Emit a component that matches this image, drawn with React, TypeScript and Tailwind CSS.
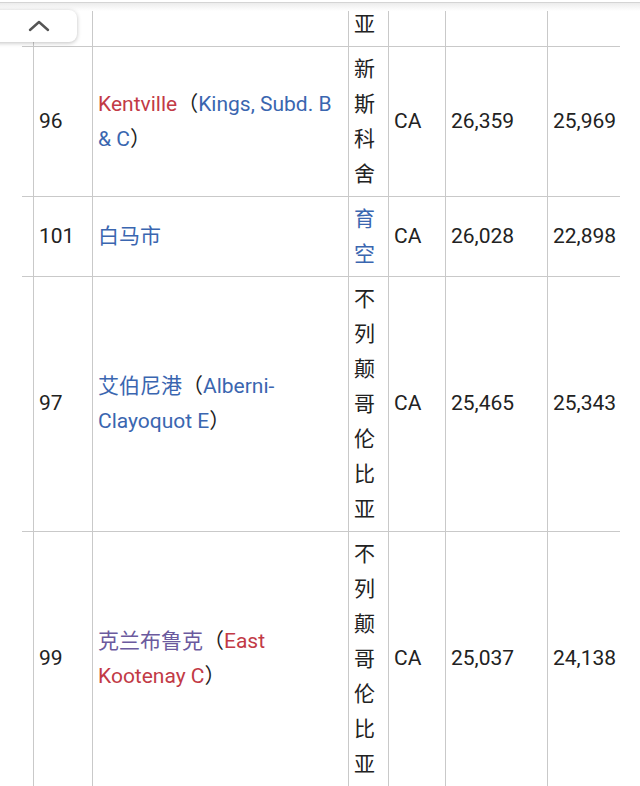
import React from "react";

const RED = "text-[#c23a46]";
const BLUE = "text-[#3a66b0]";
const PURPLE = "text-[#6b5a9e]";

function Prov({ chars, cls = "text-[#222]" }: { chars: string; cls?: string }) {
  return (
    <div className={`flex flex-col ${cls}`}>
      {chars.split("").map((c, i) => (
        <span key={i} className="block leading-[35px]">
          {c}
        </span>
      ))}
    </div>
  );
}

function Row({
  rank,
  name,
  prov,
  code,
  a,
  b,
  className = "",
}: {
  rank?: string;
  name?: React.ReactNode;
  prov: React.ReactNode;
  code?: string;
  a?: string;
  b?: string;
  className?: string;
}) {
  const cell = "flex items-center border-l border-[#c9c9c9] pl-[5px]";
  return (
    <div className={`flex w-[598px] ml-[22px] border-b border-[#c9c9c9] ${className}`}>
      <div className="w-[11px] shrink-0" />
      <div className={`${cell} w-[59px] shrink-0`}>{rank}</div>
      <div className={`${cell} w-[256px] shrink-0 pl-[5px] leading-[35px]`}>
        <div>{name}</div>
      </div>
      <div className={`${cell} w-[40px] shrink-0 pl-[5px] pt-[5px] pb-[4px]`}>{prov}</div>
      <div className={`${cell} w-[57px] shrink-0 pl-[4px]`}>{code}</div>
      <div className={`${cell} w-[102px] shrink-0`}>{a}</div>
      <div className={`${cell} flex-1`}>{b}</div>
    </div>
  );
}

export default function App() {
  return (
    <div
      className="relative w-[640px] h-[786px] overflow-hidden bg-white text-[21px] text-[#222]"
      style={{ fontFamily: 'Roboto, "Noto Sans CJK SC", sans-serif' }}
    >
      <div className="h-[3px] bg-white border-b border-[#d4d4d4]" />
      <div className="h-[8px] bg-gradient-to-b from-[#ececec] to-white" />

      {/* partial first row */}
      <div className="flex w-[598px] ml-[22px] h-[36px] overflow-hidden border-b border-[#c9c9c9] items-end">
        <div className="w-[11px] shrink-0 self-stretch" />
        <div className="w-[59px] shrink-0 self-stretch border-l border-[#c9c9c9]" />
        <div className="w-[256px] shrink-0 self-stretch border-l border-[#c9c9c9]" />
        <div className="w-[40px] shrink-0 self-stretch border-l border-[#c9c9c9] pl-[5px] pb-[4px] flex items-end">
          <span className="block leading-[35px]">亚</span>
        </div>
        <div className="w-[57px] shrink-0 self-stretch border-l border-[#c9c9c9]" />
        <div className="w-[102px] shrink-0 self-stretch border-l border-[#c9c9c9]" />
        <div className="flex-1 self-stretch border-l border-[#c9c9c9]" />
      </div>

      <Row
        rank="96"
        name={
          <>
            <span className={RED}>Kentville</span>
            <span>（</span>
            <span className={BLUE}>Kings, Subd. B</span>
            <br />
            <span className={BLUE}>&amp; C</span>
            <span>）</span>
          </>
        }
        prov={<Prov chars="新斯科舍" />}
        code="CA"
        a="26,359"
        b="25,969"
      />
      <Row
        rank="101"
        name={<span className={BLUE}>白马市</span>}
        prov={<Prov chars="育空" cls={BLUE} />}
        code="CA"
        a="26,028"
        b="22,898"
      />
      <Row
        rank="97"
        name={
          <>
            <span className={BLUE}>艾伯尼港</span>
            <span>（</span>
            <span className={BLUE}>Alberni-</span>
            <br />
            <span className={BLUE}>Clayoquot E</span>
            <span>）</span>
          </>
        }
        prov={<Prov chars="不列颠哥伦比亚" />}
        code="CA"
        a="25,465"
        b="25,343"
      />
      <Row
        rank="99"
        name={
          <>
            <span className={PURPLE}>克兰布鲁克</span>
            <span>（</span>
            <span className={RED}>East</span>
            <br />
            <span className={RED}>Kootenay C</span>
            <span>）</span>
          </>
        }
        prov={<Prov chars="不列颠哥伦比亚" />}
        code="CA"
        a="25,037"
        b="24,138"
      />

      {/* collapse button */}
      <div className="absolute top-[10px] left-[-12px] w-[89px] h-[32px] rounded-[8px] bg-white shadow-[0_1px_4px_rgba(0,0,0,0.25)] flex items-center justify-center">
        <svg width="22" height="14" viewBox="0 0 22 14" className="ml-[12px]">
          <path d="M2 11 L11 3 L20 11" fill="none" stroke="#555" strokeWidth="2.4" strokeLinecap="round" strokeLinejoin="round" />
        </svg>
      </div>
    </div>
  );
}
